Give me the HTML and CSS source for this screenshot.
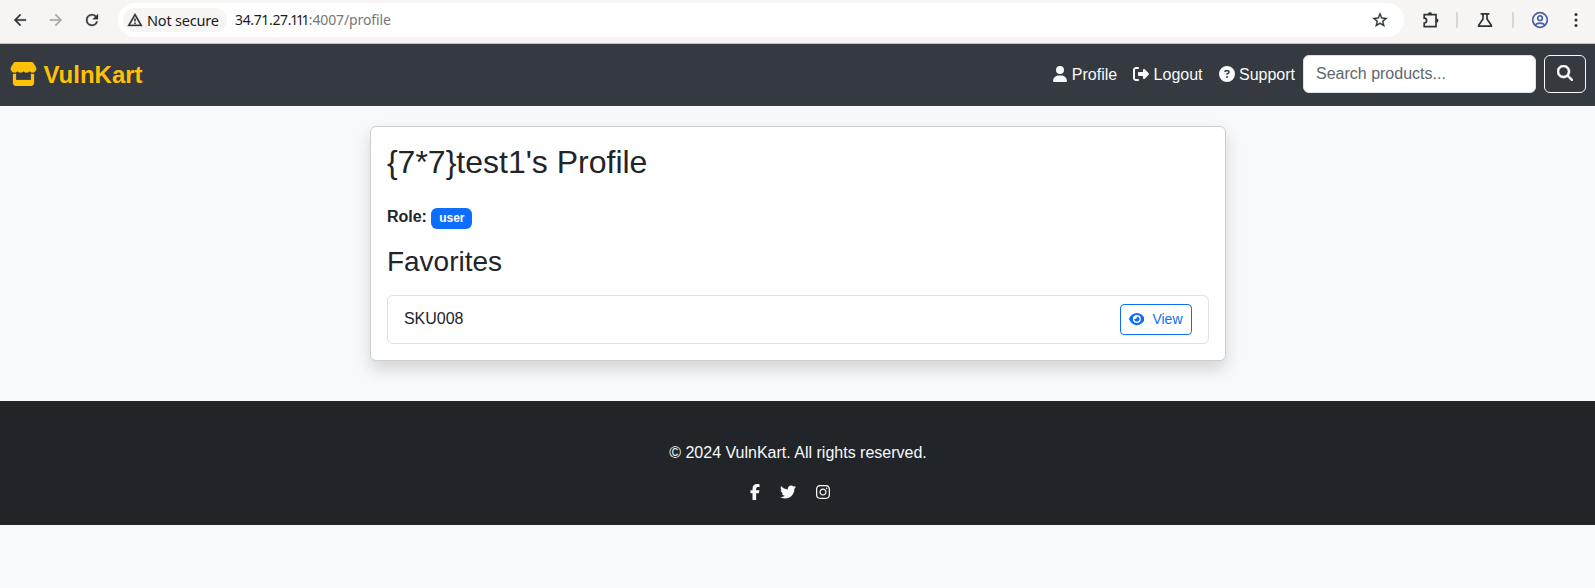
FILE: index.html
```html
<!DOCTYPE html>
<html lang="en">
<head>
<meta charset="utf-8">
<title>VulnKart</title>
<link rel="stylesheet" href="styles.css">
</head>
<body>
<div class="toolbar">
  <div class="history">
    <svg width="18" height="18" viewBox="0 0 24 24"><path d="M20 11H7.83l5.59-5.59L12 4l-8 8 8 8 1.41-1.41L7.83 13H20v-2z"/></svg>
    <svg class="disabled" width="18" height="18" viewBox="0 0 24 24"><path d="M12 4l-1.41 1.41L16.17 11H4v2h12.17l-5.58 5.59L12 20l8-8z"/></svg>
    <svg width="18" height="18" viewBox="0 0 24 24"><path d="M17.65 6.35A7.96 7.96 0 0 0 12 4a8 8 0 1 0 7.73 10h-2.08A6 6 0 1 1 12 6c1.66 0 3.14.69 4.22 1.78L13 11h7V4l-2.350 2.350z"/></svg>
  </div>
  <div class="omnibox">
    <span class="chip">
      <svg class="warning" width="16" height="16" viewBox="0 0 24 24"><path d="M12 5.99L19.53 19H4.47L12 5.99M12 2L1 21h22L12 2zm1 14h-2v2h2v-2zm0-6h-2v4h2v-4z"/></svg>
      <span class="chip-text">Not secure</span>
    </span>
    <span class="url"><span class="host">34.71.27.<span class="narrow">111</span></span>:4007/profile</span>
    <svg class="star" width="18" height="18" viewBox="0 0 24 24"><path d="M22 9.24l-7.19-.62L12 2 9.190 8.630 2 9.240l5.460 4.730L5.820 21 12 17.270 18.180 21l-1.630-7.030L22 9.240zM12 15.400l-3.760 2.270 1-4.280-3.320-2.880 4.380-.38L12 6.100l1.710 4.040 4.380.38-3.320 2.880 1 4.280L12 15.400z"/></svg>
  </div>
  <div class="tools">
    <svg width="18" height="18" viewBox="0 0 18 18"><path class="line" d="M2.200 3.700H14V15.700H2.200V12A2.400 2.400 0 0 0 2.200 7.200Z"/><path d="M5.800 3.500a2.200 2.200 0 0 1 4.400 0zM14.300 7.400a2.200 2.200 0 0 1 0 4.400z"/></svg>
    <i class="divider"></i>
    <svg class="flask" width="16" height="16" viewBox="0 0 16 16"><path class="line" d="M3.600 1.800H12.400M6 1.800V7L1.700 13.200V14.200H14.300V13.200L10 7V1.800"/></svg>
    <i class="divider"></i>
    <svg class="account" width="18" height="18" viewBox="0 0 18 18"><g class="line"><circle cx="9" cy="9" r="7.300"/><circle cx="9" cy="7.200" r="2.300"/><path d="M4 14C6.500 11.500 11.500 11.500 14 14"/></g></svg>
    <svg class="more" width="6" height="18" viewBox="0 0 6 18"><circle cx="3" cy="3.500" r="1.500"/><circle cx="3" cy="9" r="1.500"/><circle cx="3" cy="14.500" r="1.500"/></svg>
  </div>
</div>

<nav class="navbar">
  <a class="brand">
    <svg width="27" height="24" viewBox="0 0 576 512"><path d="M547.6 103.8L490.3 13.1C485.2 5 476.1 0 466.4 0H109.6C99.900 0 90.800 5 85.700 13.100L28.300 103.800c-29.600 46.800-3.400 111.900 51.900 119.400c4 .5 8.100 .8 12.100 .8c26.100 0 49.300-11.400 65.200-29c15.900 17.600 39.100 29 65.200 29c26.100 0 49.300-11.400 65.200-29c15.900 17.600 39.100 29 65.200 29c26.200 0 49.300-11.400 65.200-29c16 17.600 39.100 29 65.200 29c4.100 0 8.100-.3 12.100-.8c55.500-7.400 81.800-72.500 52.100-119.400zM499.700 254.900l-.1 0c-5.300 .7-10.700 1.100-16.200 1.100c-12.400 0-24.300-1.900-35.400-5.300V384H128V250.600c-11.200 3.500-23.200 5.400-35.600 5.400c-5.500 0-11-.4-16.300-1.100l-.1 0c-4.100-.6-8.100-1.300-12-2.300V384v64c0 35.300 28.700 64 64 64H448c35.300 0 64-28.700 64-64V384 252.600c-4 1-8 1.800-12.300 2.300z"/></svg>
    <span>VulnKart</span>
  </a>
  <div class="menu">
    <a class="nav-link"><svg width="14" height="16" viewBox="0 0 448 512"><path d="M224 256A128 128 0 1 0 224 0a128 128 0 1 0 0 256zm-45.700 48C79.800 304 0 383.800 0 482.300C0 498.700 13.300 512 29.700 512H418.300c16.400 0 29.700-13.300 29.700-29.700C448 383.800 368.200 304 269.700 304H178.300z"/></svg> <span>Profile</span></a>
    <a class="nav-link"><svg width="16" height="16" viewBox="0 0 512 512"><path d="M377.900 105.900L500.700 228.700c7.200 7.200 11.300 17.100 11.300 27.300s-4.100 20.100-11.300 27.300L377.900 406.100c-6.400 6.400-15 9.900-24 9.900c-18.700 0-33.900-15.200-33.900-33.900l0-62.100-128 0c-17.700 0-32-14.300-32-32l0-64c0-17.700 14.300-32 32-32l128 0 0-62.100c0-18.700 15.200-33.900 33.900-33.900c9 0 17.600 3.600 24 9.900zM160 96L96 96c-17.700 0-32 14.300-32 32l0 256c0 17.700 14.300 32 32 32l64 0c17.700 0 32 14.300 32 32s-14.300 32-32 32l-64 0c-53 0-96-43-96-96L0 128C0 75 43 32 96 32l64 0c17.700 0 32 14.300 32 32s-14.300 32-32 32z"/></svg> <span>Logout</span></a>
    <a class="nav-link"><svg width="16" height="16" viewBox="0 0 512 512"><path d="M256 512A256 256 0 1 0 256 0a256 256 0 1 0 0 512zM169.800 165.300c7.900-22.300 29.100-37.300 52.800-37.300h58.300c34.900 0 63.100 28.300 63.100 63.100c0 22.600-12.100 43.500-31.700 54.800L280 264.400c-.2 13-10.900 23.600-24 23.600c-13.300 0-24-10.700-24-24V250.500c0-8.600 4.600-16.500 12.100-20.800l44.300-25.400c4.700-2.700 7.600-7.700 7.600-13.100c0-8.400-6.800-15.100-15.100-15.100H222.600c-3.400 0-6.400 2.100-7.500 5.300l-.4 1.200c-4.400 12.500-18.200 19-30.600 14.600s-19-18.200-14.600-30.600l.4-1.200zM224 352a32 32 0 1 1 64 0 32 32 0 1 1 -64 0z"/></svg> <span>Support</span></a>
    <form class="search">
      <input type="text" placeholder="Search products...">
      <button type="button"><svg width="16" height="16" viewBox="0 0 512 512"><path d="M416 208c0 45.900-14.900 88.300-40 122.700L502.600 457.400c12.500 12.500 12.500 32.800 0 45.300s-32.800 12.500-45.300 0L330.700 376c-34.400 25.200-76.800 40-122.700 40C93.100 416 0 322.900 0 208S93.100 0 208 0S416 93.100 416 208zM208 352a144 144 0 1 0 0-288 144 144 0 1 0 0 288z"/></svg></button>
    </form>
  </div>
</nav>

<main class="card">
  <h2>{7*7}test1's Profile</h2>
  <p class="role"><strong>Role:</strong> <span class="badge">user</span></p>
  <h3>Favorites</h3>
  <ul class="list">
    <li><span class="sku">SKU008</span>
      <a class="view"><svg width="15.750" height="14" viewBox="0 0 576 512"><path d="M288 32c-80.800 0-145.500 36.800-192.600 80.600C48.600 156 17.300 208 2.500 243.700c-3.300 7.900-3.300 16.700 0 24.600C17.300 304 48.600 356 95.400 399.400C142.500 443.200 207.200 480 288 480s145.500-36.800 192.600-80.600c46.800-43.500 78.100-95.400 93-131.100c3.300-7.900 3.300-16.700 0-24.600c-14.900-35.700-46.200-87.700-93-131.100C433.500 68.800 368.800 32 288 32zM144 256a144 144 0 1 1 288 0 144 144 0 1 1 -288 0zm144-64c0 35.300-28.700 64-64 64c-7.100 0-13.900-1.200-20.300-3.300c-5.500-1.800-11.900 1.600-11.700 7.400c.3 6.900 1.300 13.800 3.200 20.700c13.700 51.200 66.400 81.600 117.600 67.900s81.600-66.400 67.900-117.600c-11.100-41.500-47.800-69.400-88.600-71.100c-5.800-.2-9.200 6.100-7.400 11.700c2.100 6.400 3.300 13.200 3.300 20.300z"/></svg>View</a>
    </li>
  </ul>
</main>

<footer class="footer">
  <p>© 2024 VulnKart. All rights reserved.</p>
  <div class="social">
    <svg width="10" height="16" viewBox="0 0 320 512"><path d="M80 299.300V512H196V299.300h86.500l18-97.800H196V166.900c0-51.700 20.300-71.500 72.700-71.500c16.300 0 29.400 .4 37 1.200V7.900C291.400 4 256.400 0 236.200 0C129.300 0 80 50.500 80 159.400v42.100H14v97.800H80z"/></svg>
    <svg width="16" height="16" viewBox="0 0 512 512"><path d="M459.370 151.716c.325 4.548.325 9.097.325 13.645 0 138.720-105.583 298.558-298.558 298.558-59.452 0-114.680-17.219-161.137-47.106 8.447.974 16.568 1.299 25.340 1.299 49.055 0 94.213-16.568 130.274-44.832-46.132-.975-84.792-31.188-98.112-72.772 6.498.974 12.995 1.624 19.818 1.624 9.421 0 18.843-1.300 27.614-3.573-48.081-9.747-84.143-51.980-84.143-102.985v-1.299c13.969 7.797 30.214 12.670 47.431 13.319-28.264-18.843-46.781-51.005-46.781-87.391 0-19.492 5.197-37.360 14.294-52.954 51.655 63.675 129.300 105.258 216.365 109.807-1.624-7.797-2.599-15.918-2.599-24.040 0-57.828 46.782-104.934 104.934-104.934 30.213 0 57.502 12.670 76.670 33.137 23.715-4.548 46.456-13.320 66.599-25.340-7.798 24.366-24.366 44.833-46.132 57.827 21.117-2.273 41.584-8.122 60.426-16.243-14.292 20.791-32.161 39.308-52.628 54.253z"/></svg>
    <svg width="14" height="16" viewBox="0 0 448 512"><path d="M224.100 141c-63.600 0-114.900 51.300-114.900 114.900s51.300 114.900 114.900 114.900S339 319.500 339 255.900 287.700 141 224.100 141zm0 189.600c-41.100 0-74.700-33.500-74.700-74.700s33.500-74.700 74.700-74.700 74.700 33.500 74.700 74.700-33.600 74.700-74.700 74.700zm146.400-194.300c0 14.900-12 26.800-26.800 26.800-14.900 0-26.800-12-26.800-26.800s12-26.800 26.800-26.800 26.800 12 26.800 26.800zm76.100 27.200c-1.700-35.900-9.900-67.700-36.200-93.900-26.200-26.200-58-34.400-93.900-36.200-37-2.100-147.900-2.100-184.900 0-35.800 1.700-67.600 9.900-93.900 36.100s-34.400 58-36.200 93.900c-2.100 37-2.100 147.900 0 184.900 1.700 35.900 9.900 67.700 36.200 93.900s58 34.400 93.900 36.200c37 2.100 147.900 2.100 184.900 0 35.900-1.700 67.700-9.900 93.900-36.200 26.200-26.200 34.400-58 36.200-93.900 2.100-37 2.100-147.800 0-184.800zM398.800 388c-7.800 19.600-22.900 34.700-42.600 42.600-29.500 11.700-99.500 9-132.100 9s-102.700 2.600-132.100-9c-19.600-7.800-34.700-22.900-42.600-42.600-11.700-29.500-9-99.500-9-132.100s-2.600-102.700 9-132.100c7.800-19.600 22.900-34.700 42.600-42.600 29.500-11.700 99.500-9 132.100-9s102.700-2.600 132.100 9c19.600 7.800 34.700 22.900 42.600 42.600 11.700 29.500 9 99.500 9 132.100s2.700 102.700-9 132.100z"/></svg>
  </div>
</footer>
</body>
</html>
```

FILE: styles.css
```css
* { box-sizing: border-box; }

body {
  margin: 0;
  background: #f8f9fa;
  color: #212529;
  font: 16px/24px "Liberation Sans", Arial, sans-serif;
}

svg { display: block; flex: none; fill: currentColor; }
h2, h3, p, ul { margin: 0; padding: 0; font-weight: 400; }

.line { fill: none; stroke: currentColor; stroke-width: 1.7; }

/* browser toolbar */
.toolbar {
  display: flex;
  align-items: center;
  height: 44px;
  padding: 0 16px 4px 11px;
  border-bottom: 1px solid #c6c3bf;
  background: #f6f5f4;
  color: #2e3436;
  font: 15px/20px "Noto Sans", sans-serif;
}
.history { display: flex; flex: none; gap: 18px; margin-right: 17px; }
.history path, .star path { stroke: currentColor; stroke-width: .4; }
.warning path { stroke: currentColor; stroke-width: .5; }
.disabled { opacity: .4; }
.omnibox {
  display: flex;
  flex: 1;
  align-items: center;
  height: 34px;
  padding: 0 15px 0 5px;
  border-radius: 17px;
  background: #fff;
}
.chip {
  display: flex;
  align-items: center;
  gap: 4px;
  width: 104px;
  height: 24px;
  padding-left: 4px;
  border-radius: 12px;
  background: #f6f5f4;
  white-space: nowrap;
}
.chip-text { color: #1b1c1d; font-size: 14.500px; letter-spacing: -.2px; }
.url { margin-left: 8px; color: #777; font-size: 14px; letter-spacing: -.12px; }
.host { color: #1b1c1d; letter-spacing: -.36px; }
.narrow { margin: 0 1.700px 0 -.8px; letter-spacing: -2.400px; }
.star { margin-left: auto; }
.tools { display: flex; flex: none; align-items: center; margin-left: 18px; }
.divider { width: 2px; height: 16px; margin: 0 16px; background: #d9d7d2; }
.flask { margin: 0 3px; }
.flask + .divider { margin-right: 17px; }
.account { color: #4a5fa8; }
.more { margin-left: 24px; }

/* site navigation */
.navbar {
  display: flex;
  align-items: center;
  justify-content: space-between;
  height: 62px;
  padding: 0 9px 2px 10px;
  background: #343a40;
  color: #f8f9fa;
}
.brand {
  display: flex;
  align-items: center;
  gap: 6.200px;
  color: #ffc107;
  font-size: 24px;
  font-weight: 700;
}
.brand svg { margin-left: .3px; }
.brand path { stroke: currentColor; stroke-width: 5; }
.brand span { padding-top: 2px; }
.menu { display: flex; align-items: center; }
.nav-link { display: flex; align-items: center; gap: 4.450px; padding: 0 8px; }
.nav-link span { padding-top: 2px; }
.search { display: flex; gap: 8px; margin: 0; }
.search input {
  width: 233px;
  height: 38px;
  padding: 6px 12px;
  border: 1px solid #dee2e6;
  border-radius: 6px;
  background: #fff;
  font: inherit;
}
.search input::placeholder { color: #5f666d; opacity: 1; }
.search button {
  width: 42px;
  height: 38px;
  padding: 0 12px 2px;
  border: 1px solid #f8f9fa;
  border-radius: 6px;
  background: none;
  color: #f8f9fa;
}
.search button path { stroke: currentColor; stroke-width: 18; }

/* profile card */
.card {
  width: 856px;
  margin: 20px auto 40px;
  padding: 16px 16px 16px 16.400px;
  border: 1px solid #cdcfd1;
  border-radius: 6px;
  background: #fff;
  box-shadow: 0 8px 16px rgba(0, 0, 0, .15);
}
.card h2 { margin-bottom: 24px; font-size: 32px; line-height: 38.400px; }
.role { margin-bottom: 16px; }
.badge {
  display: inline-block;
  padding: 4.200px 7.800px;
  border-radius: 6px;
  background: #0d6efd;
  color: #fff;
  font-size: 12px;
  font-weight: 700;
  line-height: 12px;
  vertical-align: baseline;
}
.card h3 { margin-bottom: 16px; font-size: 28px; line-height: 33.600px; }
.list li {
  display: flex;
  align-items: center;
  justify-content: space-between;
  padding: 8px 16px;
  border: 1px solid #dee2e6;
  border-radius: 6px;
}
.sku { padding-bottom: 2px; }
.view {
  display: flex;
  align-items: center;
  gap: 8px;
  height: 31px;
  padding: 0 8px 2px;
  border: 1px solid #0d6efd;
  border-radius: 4px;
  color: #0d6efd;
  font-size: 14px;
}

/* footer */
.footer {
  height: 124px;
  padding: 40px 0 0 1px;
  background: #212529;
  color: #f8f9fa;
  text-align: center;
}
.social {
  display: flex;
  justify-content: center;
  gap: 20.450px;
  margin-top: 19px;
  padding-right: 16px;
}
```
